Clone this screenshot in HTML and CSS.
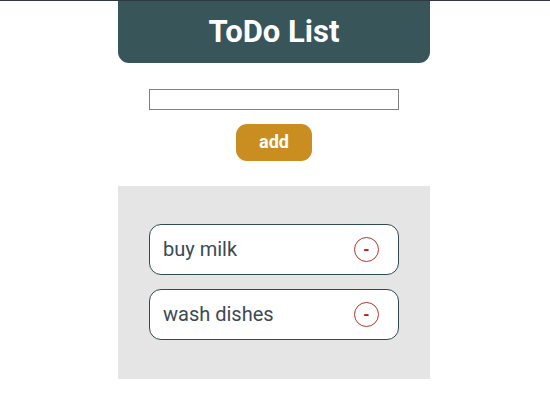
FILE: index.html
```html
<!DOCTYPE html>
<html>
<head>
<meta charset="utf-8">
<link rel="stylesheet" href="styles.css">
</head>
<body>
<div class="app">
  <header class="header"><h1 class="title">ToDo List</h1></header>
  <div class="form">
    <input class="field" type="text">
    <button class="add">add</button>
  </div>
  <ul class="list">
    <li class="item"><span class="label">buy milk</span><button class="remove">-</button></li>
    <li class="item"><span class="label">wash dishes</span><button class="remove">-</button></li>
  </ul>
</div>
</body>
</html>
```
FILE: styles.css
```css
html, body { margin: 0; padding: 0; background: #fff; }
body {
  border-top: 1px solid #2d3842;
  font-family: Roboto, "Liberation Sans", sans-serif;
}
.app {
  width: 312px;
  margin-left: 118px;
  display: flex;
  flex-direction: column;
  align-items: center;
}
.header {
  width: 100%;
  height: 62px;
  background: #38555a;
  border-radius: 0 0 11px 11px;
  display: flex;
  align-items: center;
  justify-content: center;
}
.title {
  margin: 0;
  color: #fff;
  font-size: 31px;
  font-weight: 700;
  line-height: 1;
  padding-bottom: 1px;
}
.form {
  display: flex;
  flex-direction: column;
  align-items: center;
  padding-top: 26px;
  gap: 14px;
}
.field {
  box-sizing: border-box;
  width: 250px;
  height: 21px;
  border: 1px solid #808080;
  margin: 0;
  padding: 0 2px;
  outline: none;
}
.add {
  box-sizing: border-box;
  width: 76px;
  height: 37px;
  border: none;
  border-radius: 11px;
  background: #c98d20;
  color: #fff;
  font-family: Roboto, "Liberation Sans", sans-serif;
  font-size: 18px;
  font-weight: 700;
  padding: 0 0 2px;
  margin: 0;
}
.list {
  list-style: none;
  margin: 25px 0 0;
  box-sizing: border-box;
  width: 100%;
  background: #e5e5e5;
  padding: 38px 31px 39px;
  display: flex;
  flex-direction: column;
  gap: 14px;
}
.item {
  box-sizing: border-box;
  height: 51px;
  background: #fff;
  border: 1px solid #2f4c52;
  border-radius: 12px;
  display: flex;
  align-items: center;
  justify-content: space-between;
  padding: 0 19px 0 13px;
}
.label {
  font-size: 20px;
  color: #3a4a56;
  padding-bottom: 1px;
}
.remove {
  box-sizing: border-box;
  width: 25px;
  height: 25px;
  border-radius: 50%;
  border: 1.5px solid #b5372a;
  background: #fff;
  color: #b02020;
  font-family: Roboto, "Liberation Sans", sans-serif;
  font-size: 16px;
  font-weight: 700;
  line-height: 1;
  padding: 0;
  margin: 0;
  display: flex;
  align-items: center;
  justify-content: center;
}
```
